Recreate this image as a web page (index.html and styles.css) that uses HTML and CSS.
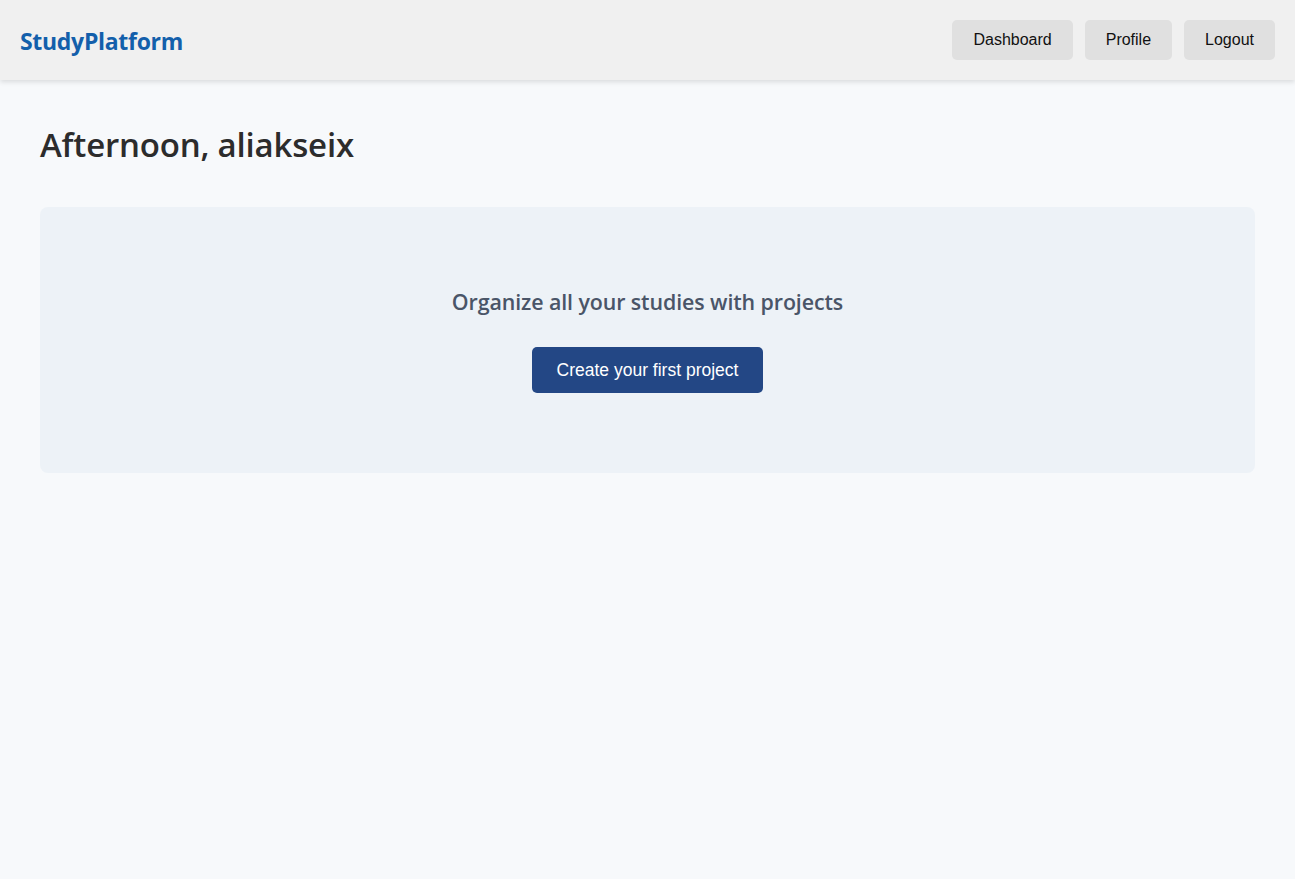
FILE: index.html
```html
<!DOCTYPE html>
<html lang="en">
<head>
<meta charset="utf-8">
<title>StudyPlatform</title>
<link rel="stylesheet" href="styles.css">
</head>
<body>
<header class="topbar">
  <a class="logo" href="#">StudyPlatform</a>
  <nav class="nav">
    <button class="nav-btn">Dashboard</button>
    <button class="nav-btn">Profile</button>
    <button class="nav-btn">Logout</button>
  </nav>
</header>
<main class="main">
  <h1 class="greeting">Afternoon, aliakseix</h1>
  <section class="empty">
    <h3 class="empty-title">Organize all your studies with projects</h3>
    <button class="primary-btn">Create your first project</button>
  </section>
</main>
</body>
</html>
```
FILE: styles.css
```css
* { box-sizing: border-box; }
html, body { margin: 0; padding: 0; }
body {
  background: #f7f9fb;
  font-family: "Open Sans", "Noto Sans", sans-serif;
  color: #2d2d2d;
  min-height: 879px;
}
.topbar {
  height: 80px;
  background: #f0f0f0;
  box-shadow: 0 2px 5px rgba(0,0,0,0.12);
  display: flex;
  align-items: center;
  justify-content: space-between;
  padding: 0 20px;
}
.logo {
  font-family: "Open Sans", sans-serif;
  font-weight: 700;
  font-size: 23px;
  color: #135fab;
  text-decoration: none;
  letter-spacing: -0.3px;
  margin-top: 2px;
}
.nav { display: flex; gap: 12px; }
.nav-btn {
  font-family: "Liberation Sans", Arial, sans-serif;
  font-size: 16px;
  color: #111;
  background: #e0e0e0;
  border: none;
  border-radius: 5px;
  height: 40px;
  padding: 0 21px;
}
.main { padding: 40px; }
.greeting {
  margin: 3px 0 41px;
  font-size: 33px;
  font-weight: 600;
  line-height: 43px;
  color: #2c2c2c;
  letter-spacing: -0.2px;
}
.empty {
  background: #edf2f7;
  border-radius: 8px;
  height: 266px;
  display: flex;
  flex-direction: column;
  align-items: center;
  padding-top: 80px;
}
.empty-title {
  margin: 0 0 30px;
  font-size: 21.4px;
  font-weight: 600;
  line-height: 30px;
  color: #4a5568;
  letter-spacing: -0.1px;
}
.primary-btn {
  font-family: "Liberation Sans", Arial, sans-serif;
  font-size: 17.5px;
  color: #fff;
  background: #234785;
  border: none;
  border-radius: 5px;
  height: 46px;
  width: 231px;
  padding: 0;
}
```
